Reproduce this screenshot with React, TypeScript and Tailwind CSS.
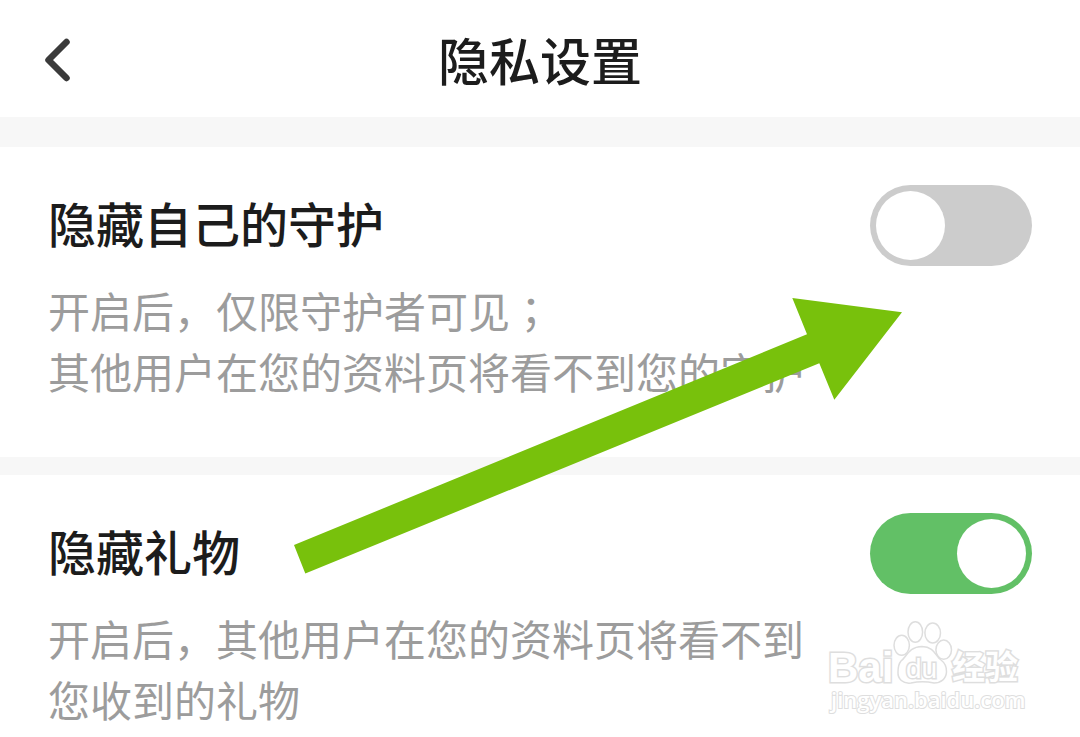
import React, { useState } from 'react';

interface SettingSectionProps {
  id: string;
  title: string;
  desc: React.ReactNode[];
  checked: boolean;
  onChange: (checked: boolean) => void;
}

const SettingSection: React.FC<SettingSectionProps> = ({ id, title, desc, checked, onChange }) => (
  <section className="bg-white px-12 pt-[38px] pb-[56px] last:pb-1">
    <div className="flex items-start justify-between">
      <label htmlFor={id} className="text-[48px] leading-[75px] font-medium text-[#1c1c1c]">
        {title}
      </label>
      <span className="relative h-[81px] w-[162px] shrink-0">
        <input
          id={id}
          type="checkbox"
          role="switch"
          aria-describedby={`${id}-desc`}
          checked={checked}
          onChange={(e) => onChange(e.target.checked)}
          className="peer block size-full appearance-none rounded-full bg-[#cccccc] checked:bg-[#62c066] cursor-pointer transition-colors"
        />
        <span className="pointer-events-none absolute left-[6px] top-[6px] size-[69px] rounded-full bg-white peer-checked:left-[87px]" />
      </span>
    </div>
    <p id={`${id}-desc`} className="mt-[13px] text-[42px] leading-[61px] font-normal text-[#9c9c9c]">
      {desc.map((line, i) => (
        <span key={i} className="block">{line}</span>
      ))}
    </p>
  </section>
);

const GuideArrow = () => (
  <svg
    viewBox="0 0 608 276"
    className="pointer-events-none absolute left-[294px] top-[298px] h-[276px] w-[608px]"
    aria-hidden="true"
  >
    <path d="M0 247 513 36.300 498.300 0 608 14.300 540.300 101.800 525.300 65.300 11.300 275.600Z" fill="#78c10c" />
  </svg>
);

const Watermark = () => (
  <svg
    viewBox="0 0 204 100"
    className="pointer-events-none absolute left-[824px] top-[618px] h-[100px] w-[204px]"
    fill="#ffffff"
    stroke="#dedede"
    strokeWidth="1.500"
    aria-hidden="true"
  >
    <text x="4" y="64" fontSize="42" fontWeight="700" strokeWidth="3" paintOrder="stroke" className="font-['Liberation_Sans',Arial,sans-serif]">Bai</text>
    <ellipse cx="77.700" cy="27.300" rx="7.700" ry="10" />
    <ellipse cx="91.300" cy="14" rx="7.300" ry="10.200" />
    <ellipse cx="108.700" cy="15" rx="7.800" ry="10" />
    <ellipse cx="119.700" cy="31.700" rx="7.800" ry="9.600" />
    <path d="M77 43C83 39 84 29 98 28.500C111 29 111 38 117 42C121 45 122.800 49 122.500 54C122 61 117 65 110 65C103 63.500 94 63.500 87 65C79 66 73.500 61 74 54C74 49 74.500 46 77 43Z" />
    <text x="82" y="60" fontSize="28" strokeWidth="3" paintOrder="stroke" className="font-['Liberation_Sans',Arial,sans-serif]">du</text>
    <text x="128" y="61" fontSize="33" fontWeight="700" strokeWidth="3" paintOrder="stroke" className="font-['Noto_Sans_CJK_SC',sans-serif]">经验</text>
    <text x="7" y="90" fontSize="22" fontWeight="600" strokeWidth="2" paintOrder="stroke" className="font-['Open_Sans',sans-serif]">jingyan.baidu.com</text>
  </svg>
);

export default function App() {
  const [hideGuard, setHideGuard] = useState(false);
  const [hideGifts, setHideGifts] = useState(true);

  return (
    <div className="relative overflow-hidden bg-white font-['Noto_Sans_CJK_SC',sans-serif]">
      <header className="grid h-[117px] grid-cols-[120px_1fr_120px] items-center">
        <button type="button" aria-label="返回" className="flex h-full items-center pl-[42px] cursor-pointer">
          <svg
            viewBox="0 0 32 48"
            className="h-12 w-8"
            fill="none"
            stroke="#3b3b3b"
            strokeWidth="6.500"
            strokeLinecap="round"
            strokeLinejoin="round"
            aria-hidden="true"
          >
            <path d="M24.500 7 6.500 25 24.500 43" />
          </svg>
        </button>
        <h1 className="text-center text-[51px] leading-[76px] font-medium text-[#1c1c1c]">隐私设置</h1>
      </header>

      <main className="bg-[#f7f7f7] pt-[30px] flex flex-col gap-[18px]">
        <SettingSection
          id="hide-guard"
          title="隐藏自己的守护"
          desc={[
            <>
              开启后，仅限守护者可见
              {/* the TC face sets the semicolon in the middle of its cell */}
              <span className="font-['Noto_Sans_CJK_TC',sans-serif]">；</span>
            </>,
            '其他用户在您的资料页将看不到您的守护',
          ]}
          checked={hideGuard}
          onChange={setHideGuard}
        />
        <SettingSection
          id="hide-gifts"
          title="隐藏礼物"
          desc={['开启后，其他用户在您的资料页将看不到', '您收到的礼物']}
          checked={hideGifts}
          onChange={setHideGifts}
        />
      </main>

      <GuideArrow />
      <Watermark />
    </div>
  );
}
